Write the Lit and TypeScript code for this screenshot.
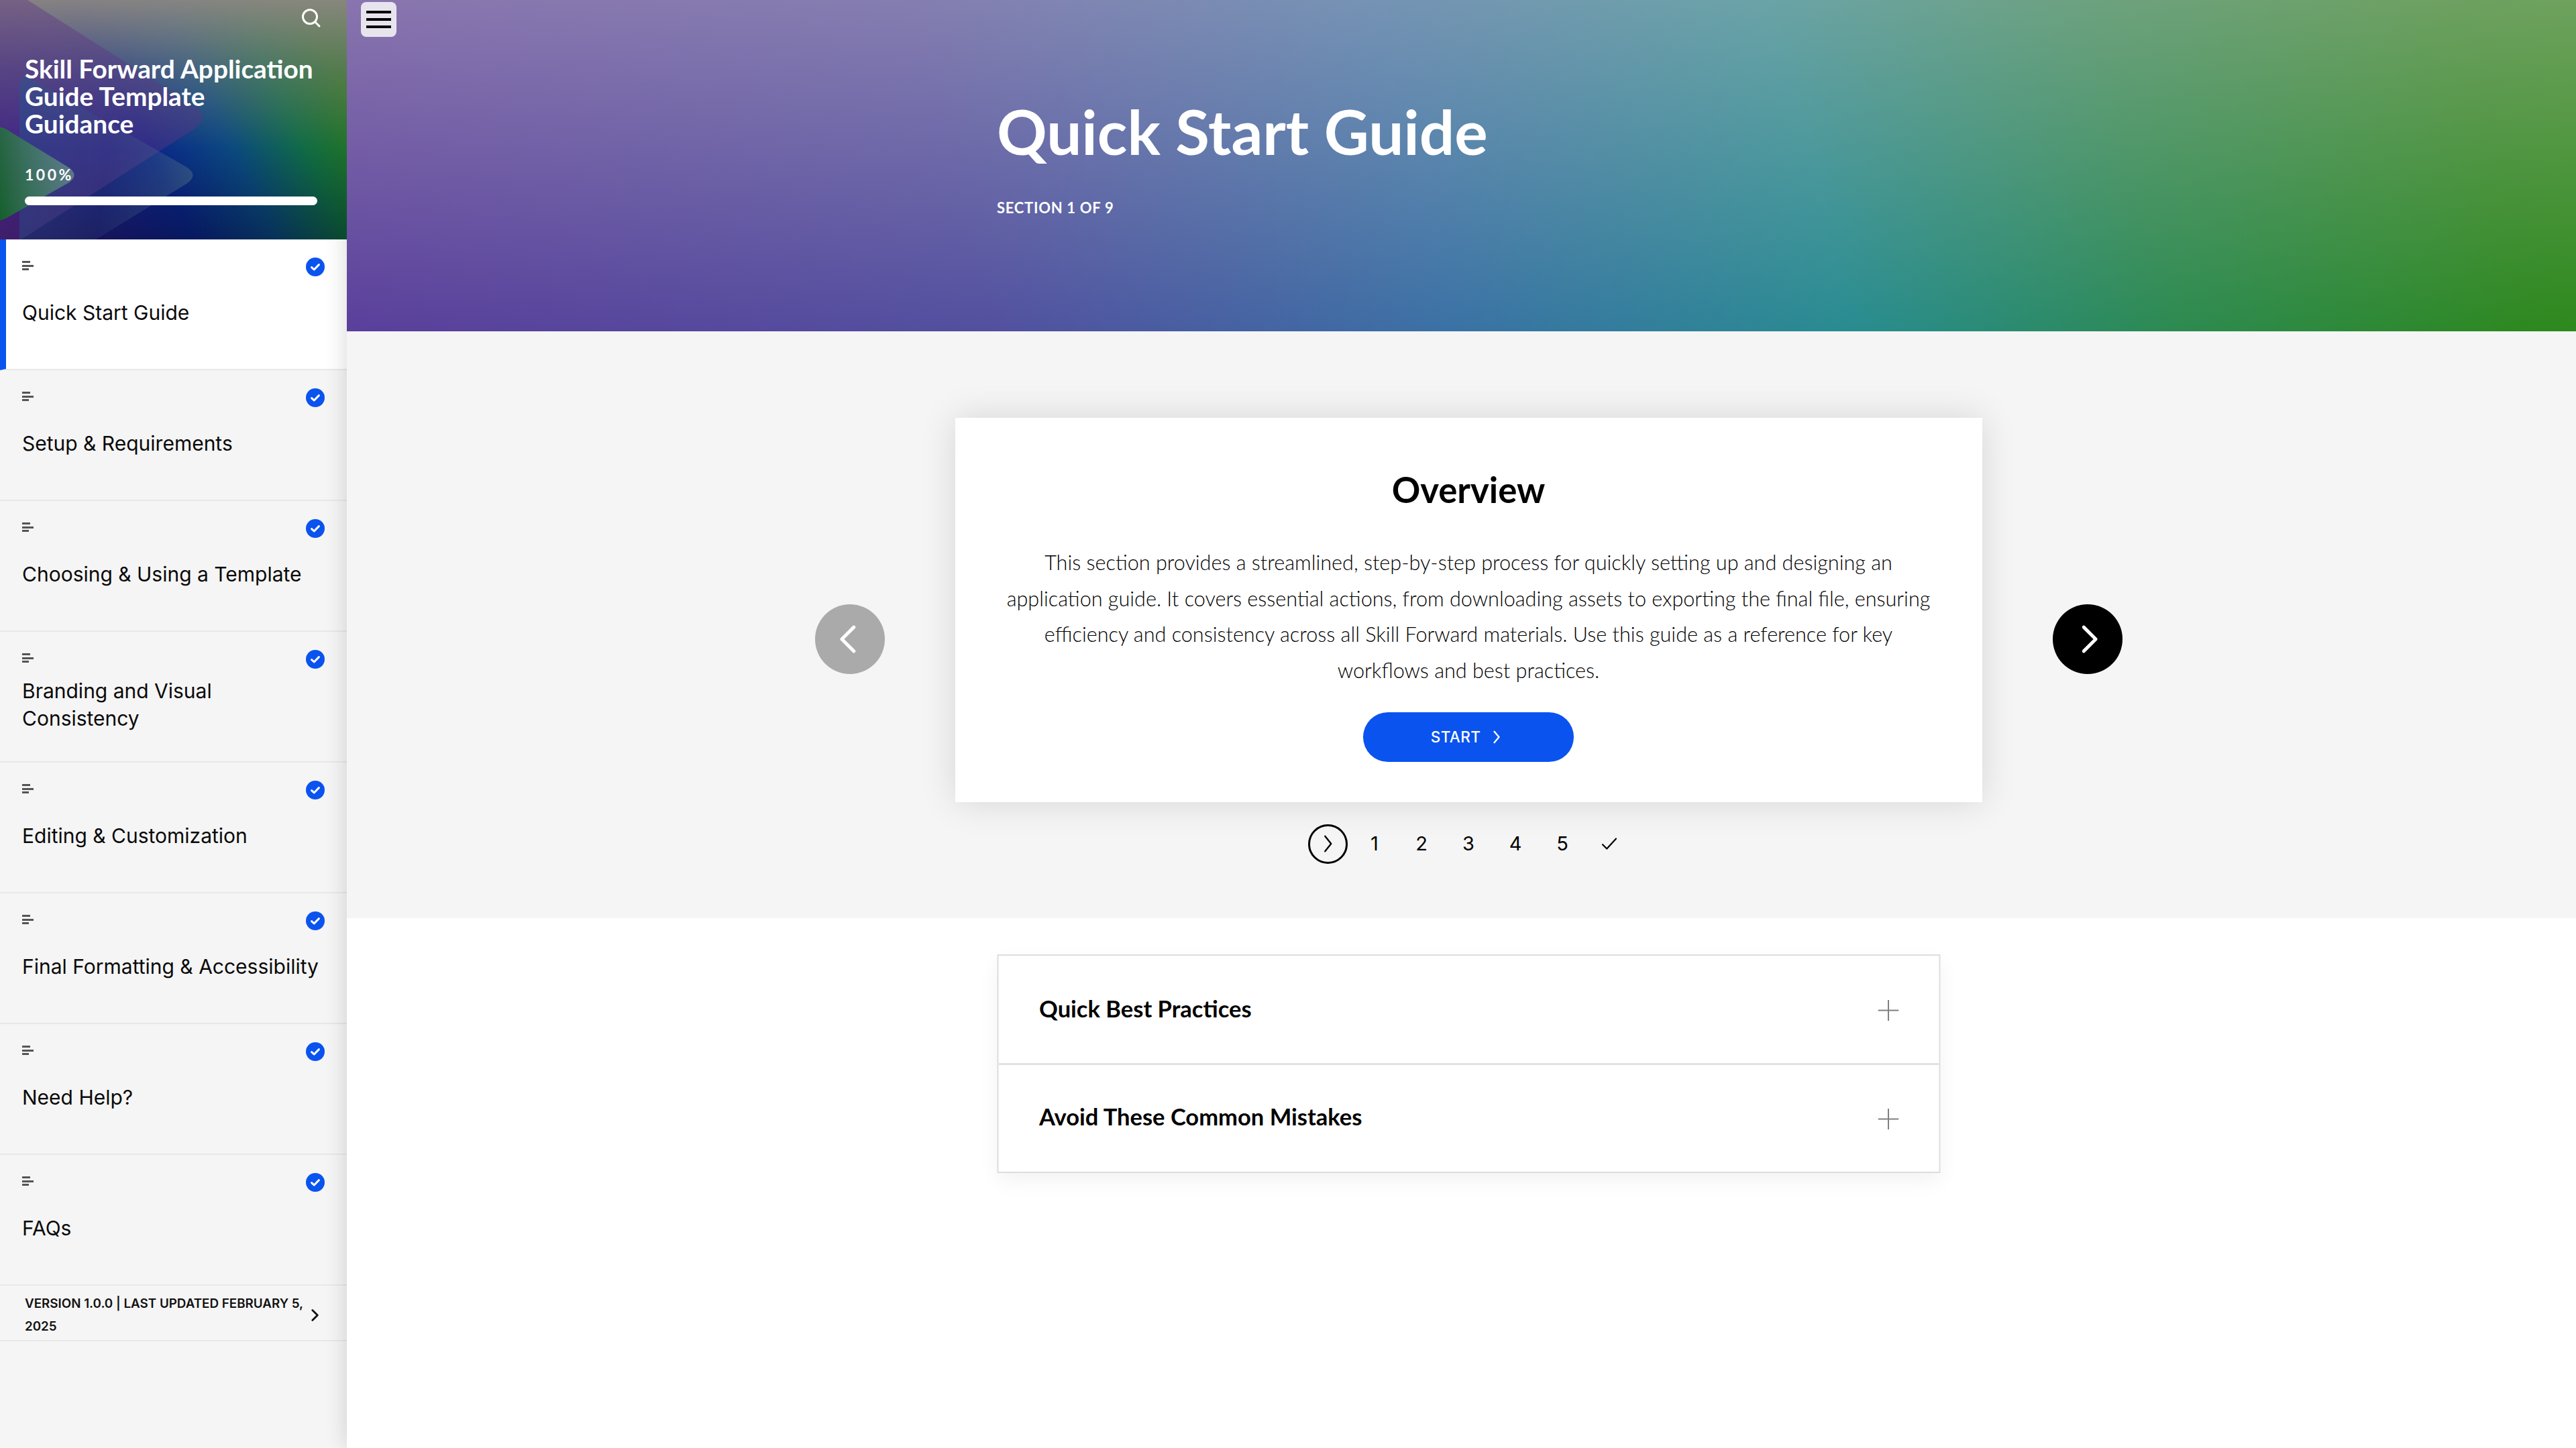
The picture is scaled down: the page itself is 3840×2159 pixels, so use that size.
import { LitElement, html, css, svg } from "lit";
import { customElement } from "lit/decorators.js";

const ITEMS = [
  "Quick Start Guide",
  "Setup & Requirements",
  "Choosing & Using a Template",
  "Branding and Visual Consistency",
  "Editing & Customization",
  "Final Formatting & Accessibility",
  "Need Help?",
  "FAQs",
];

const chevron = (cls: string, d: string) =>
  html`<svg class=${cls} viewBox="0 0 24 24" fill="none" stroke="currentColor" stroke-linecap="round" stroke-linejoin="round"><path d=${d}></path></svg>`;

@customElement("app-root")
export class AppRoot extends LitElement {
  static styles = css`
    :host { display: flex; width: 100%; height: 100vh; min-height: 2159px; overflow: hidden; background: #fff; font-family: "Lato", "Liberation Sans", sans-serif; color: #000; }
    .sidebar { width: 517px; flex: none; background: #f5f5f5; display: flex; flex-direction: column; }
    .brand { position: relative; z-index: 2; height: 357px; flex: none; overflow: hidden; box-sizing: border-box; padding: 82px 37px 0; color: #fff;
      background:
        linear-gradient(to bottom, rgba(140,135,130,.95) 0%, rgba(120,125,125,.55) 28%, rgba(20,60,60,.08) 62%, rgba(0,0,0,.34) 100%),
        linear-gradient(65deg, #3d1585 0%, #0a2590 42%, #0a4a85 60%, #107045 76%, #2a7a18 90%, #2a7a18 100%); }
    .decor { position: absolute; left: 0; top: 0; width: 517px; height: 357px; }
    .search { position: absolute; left: 448px; top: 11px; width: 31px; height: 31px; color: #fff; }
    .brand-title { position: relative; margin: 0; font-size: 38.8px; line-height: 41px; font-weight: 700; }
    .pct { position: relative; margin-top: 41px; font-size: 23px; line-height: 28px; font-weight: 700; letter-spacing: 3.5px; }
    .bar { position: relative; margin-top: 19px; width: 436px; height: 13px; border-radius: 7px; background: #fff; }
    .item { position: relative; height: 195px; flex: none; box-sizing: border-box; padding: 27px 33px 30px; border-bottom: 2px solid #e8e8e8; display: flex; flex-direction: column; font-family: "Inter", sans-serif; }
    .item.active { background: #fff; border-left: 9px solid #0a53ee; padding-left: 24px; }
    .top { display: flex; justify-content: space-between; align-items: flex-start; height: 28px; }
    .lines { display: flex; flex-direction: column; gap: 2.5px; margin-top: 5px; }
    .lines i { display: block; height: 3px; background: #555; }
    .check { width: 28px; height: 28px; }
    .label { flex: 1; display: flex; align-items: center; font-size: 30px; line-height: 41px; color: #0a0a0a; }
    .version { box-sizing: border-box; height: 83px; flex: none; padding: 7px 35px 0 37px; border-bottom: 2px solid #e8e8e8; display: flex; align-items: center; justify-content: space-between; font-family: "Inter", sans-serif; font-size: 18.8px; font-weight: 600; line-height: 34px; color: #111; }
    .version span { width: 420px; }
    .version svg { width: 26px; height: 26px; stroke-width: 2.6; flex: none; }
    .main { position: relative; z-index: 1; flex: 1; min-width: 0; box-shadow: 0 0 32px rgba(0,0,0,.16); background: #fff; }
    .hero { box-sizing: border-box; height: 494px; padding: 141px 0 0 21px; display: flex; justify-content: center; color: #fff;
      background:
        linear-gradient(180deg, rgba(215,200,205,.38) 0%, rgba(215,200,205,0) 100%),
        linear-gradient(75deg, #5a3f9b 0%, #52509f 28%, #3a72a5 48%, #288c90 65%, #2c8a50 79%, #2d8820 94%, #2d8a18 100%); }
    .hero-in { width: 1406px; }
    .menu { position: absolute; left: 21px; top: 3px; width: 53px; height: 52px; box-sizing: border-box; border-radius: 8px; background: #e8e4ee; display: flex; flex-direction: column; justify-content: center; align-items: center; gap: 7px; }
    .menu i { display: block; width: 37px; height: 4px; background: #000; }
    h1 { margin: 0; font-size: 92.5px; line-height: 110px; font-weight: 700; }
    .sec { margin-top: 47px; font-size: 22px; line-height: 24px; font-weight: 700; letter-spacing: .7px; }
    .stage { box-sizing: border-box; height: 875px; background: #f5f5f5; padding: 129px 0 0 21px; display: flex; justify-content: center; align-items: flex-start; gap: 105px; }
    .mid { display: flex; flex-direction: column; width: 1531px; flex: none; }
    .arrow { margin-top: 278px; flex: none; width: 104px; height: 104px; border-radius: 50%; display: flex; align-items: center; justify-content: center; color: #fff; }
    .arrow.prev { background: #aaa; }
    .arrow.next { background: #000; }
    .arrow svg { width: 66px; height: 66px; stroke-width: 1.8; }
    .card { box-sizing: border-box; height: 573px; background: #fff; box-shadow: 0 0 50px rgba(0,0,0,.13); padding: 77px 0 0; text-align: center; display: flex; flex-direction: column; align-items: center; }
    h2 { margin: 0; font-size: 52.7px; line-height: 60px; font-weight: 700; }
    .copy { margin: 52px 0 0; font-size: 30.6px; line-height: 53.7px; font-weight: 300; color: #000; white-space: nowrap; }
    .start { margin-top: 35px; width: 314px; height: 74px; border-radius: 37px; background: #0a53ee; color: #fff; display: flex; align-items: center; justify-content: center; gap: 10px; font-size: 22.5px; font-weight: 500; letter-spacing: .4px; font-family: "Inter", sans-serif; }
    .start svg { width: 28px; height: 28px; stroke-width: 2; }
    .pager { margin-top: 32px; display: grid; grid-template-columns: repeat(7, 70px); justify-content: center; height: 60px; align-items: center; justify-items: center; font-family: "Inter", sans-serif; font-size: 29px; color: #000; }
    .pager span { position: relative; top: -1px; }
    .cur { box-sizing: border-box; width: 59px; height: 59px; border: 3px solid #000; border-radius: 50%; display: flex; align-items: center; justify-content: center; }
    .cur svg { width: 36px; height: 36px; stroke-width: 1.6; }
    .tick { width: 30px; height: 30px; stroke-width: 1.8; }
    .acc { box-sizing: border-box; width: 1406px; margin: 54px 0 0 21px; position: relative; left: 50%; transform: translateX(calc(-50% - 10.5px)); border: 2px solid #ddd; box-shadow: 0 12px 30px rgba(0,0,0,.05); }
    .acc-row { height: 160px; box-sizing: border-box; display: flex; align-items: center; justify-content: space-between; padding: 0 60px 3px 61px; font-size: 34.5px; font-weight: 700; }
    .acc-row + .acc-row { height: 162px; border-top: 3px solid #e2e2e2; padding-bottom: 6px; }
    .plus { width: 31px; height: 31px; stroke: #808080; stroke-width: 2; margin-top: 5px; }
    .acc-row + .acc-row .plus { margin-top: 8px; }
  `;

  private check() {
    return html`<svg class="check" viewBox="0 0 28 28"><circle cx="14" cy="14" r="14" fill="#0a53ee"></circle><path d="M8.6 14.6l3.6 3.4 7.2-7.4" fill="none" stroke="#fff" stroke-width="3" stroke-linecap="round" stroke-linejoin="round"></path></svg>`;
  }

  render() {
    return html`
      <aside class="sidebar">
        <header class="brand">
          <svg class="decor" viewBox="0 0 517 357">
            ${svg`<defs>
              <linearGradient id="gt" x1="1" y1="0.5" x2="0" y2="0.7"><stop offset="0" stop-color="#6a958c" stop-opacity=".7"></stop><stop offset="1" stop-color="#0b5c22" stop-opacity="1"></stop></linearGradient>
              <linearGradient id="bt" x1="1" y1="0.5" x2="0" y2="0.4"><stop offset="0" stop-color="#7a958c" stop-opacity=".3"></stop><stop offset=".5" stop-color="#3a6a88" stop-opacity=".15"></stop><stop offset="1" stop-color="#1c5a90" stop-opacity=".38"></stop></linearGradient>
            </defs>
            <path d="M-20 -20 L33 -5 L293 160 Q312 172 293 190 L-20 390 Z" fill="#5f3585" fill-opacity=".42"></path>
            <path d="M46 117 L278 249 Q297 261 278 274 L143 357 L29 357 L29 130 Q29 110 46 117 Z" fill="url(#bt)"></path>
            <path d="M8 192 L103 250 Q118 261 103 272 L8 326 Q-10 334 -20 322 L-20 200 Q-8 184 8 192 Z" fill="url(#gt)"></path>`}
          </svg>
          <svg class="search" viewBox="0 0 31 31" fill="none" stroke="currentColor" stroke-width="3" stroke-linecap="round"><circle cx="14" cy="14" r="10.5"></circle><path d="M22 22l6 6"></path></svg>
          <h3 class="brand-title">Skill Forward Application<br />Guide Template<br />Guidance</h3>
          <div class="pct">100%</div>
          <div class="bar"></div>
        </header>
        ${ITEMS.map(
          (t, i) => html`<div class="item ${i === 0 ? "active" : ""}">
            <div class="top">
              <div class="lines"><i style="width:12px"></i><i style="width:17px"></i><i style="width:10px"></i></div>
              ${this.check()}
            </div>
            <div class="label">${t}</div>
          </div>`
        )}
        <div class="version">
          <span>VERSION 1.0.0 | LAST UPDATED FEBRUARY 5, 2025</span>
          ${chevron("", "M9 5l7 7-7 7")}
        </div>
      </aside>
      <main class="main">
        <section class="hero">
          <div class="hero-in">
            <h1>Quick Start Guide</h1>
            <div class="sec">SECTION 1 OF 9</div>
          </div>
        </section>
        <div class="menu"><i></i><i></i><i></i></div>
        <section class="stage">
          <div class="arrow prev">${chevron("", "M14.1 5.5L7.6 12l6.5 6.5")}</div>
          <div class="mid">
            <article class="card">
              <h2>Overview</h2>
              <p class="copy">This section provides a streamlined, step-by-step process for quickly setting up and designing an<br />application guide. It covers essential actions, from downloading assets to exporting the final file, ensuring<br />efficiency and consistency across all Skill Forward materials. Use this guide as a reference for key<br />workflows and best practices.</p>
              <div class="start">START ${chevron("", "M9 5l6 7-6 7")}</div>
            </article>
            <nav class="pager">
              <div class="cur">${chevron("", "M9.5 4.5l6 7.5-6 7.5")}</div>
              <span>1</span><span>2</span><span>3</span><span>4</span><span>5</span>
              ${chevron("tick", "M4 13l5 5L20 6")}
            </nav>
          </div>
          <div class="arrow next">${chevron("", "M9.9 5.5l6.5 6.5-6.5 6.5")}</div>
        </section>
        <section class="acc">
          <div class="acc-row">Quick Best Practices <svg class="plus" viewBox="0 0 31 31"><path d="M15.5 0v31M0 15.5h31"></path></svg></div>
          <div class="acc-row">Avoid These Common Mistakes <svg class="plus" viewBox="0 0 31 31"><path d="M15.5 0v31M0 15.5h31"></path></svg></div>
        </section>
      </main>
    `;
  }
}
